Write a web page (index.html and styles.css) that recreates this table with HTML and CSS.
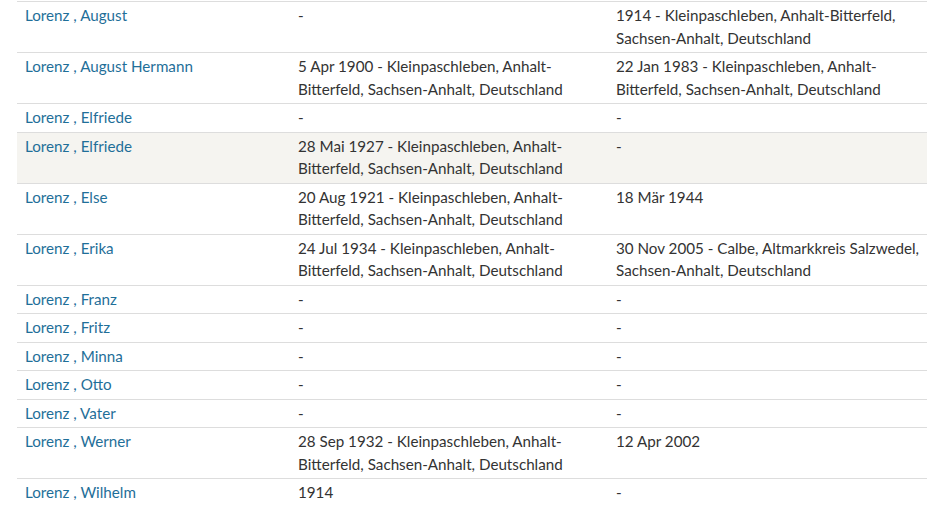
FILE: index.html
```html
<!DOCTYPE html>
<html lang="de">
<head>
<meta charset="utf-8">
<title>Lorenz</title>
<link rel="stylesheet" href="styles.css">
</head>
<body>
<div class="wrap">
<table class="persons">
<colgroup><col class="c1"><col class="c2"><col class="c3"></colgroup>
<tbody>
<tr><td><a href="#">Lorenz , August</a></td><td>-</td><td>1914 - Kleinpaschleben, Anhalt-Bitterfeld, Sachsen-Anhalt, Deutschland</td></tr>
<tr><td><a href="#">Lorenz , August Hermann</a></td><td>5 Apr 1900 - Kleinpaschleben, Anhalt-Bitterfeld, Sachsen-Anhalt, Deutschland</td><td>22 Jan 1983 - Kleinpaschleben, Anhalt-Bitterfeld, Sachsen-Anhalt, Deutschland</td></tr>
<tr><td><a href="#">Lorenz , Elfriede</a></td><td>-</td><td>-</td></tr>
<tr class="hl"><td><a href="#">Lorenz , Elfriede</a></td><td>28 Mai 1927 - Kleinpaschleben, Anhalt-Bitterfeld, Sachsen-Anhalt, Deutschland</td><td>-</td></tr>
<tr><td><a href="#">Lorenz , Else</a></td><td>20 Aug 1921 - Kleinpaschleben, Anhalt-Bitterfeld, Sachsen-Anhalt, Deutschland</td><td>18 Mär 1944</td></tr>
<tr><td><a href="#">Lorenz , Erika</a></td><td>24 Jul 1934 - Kleinpaschleben, Anhalt-Bitterfeld, Sachsen-Anhalt, Deutschland</td><td>30 Nov 2005 - Calbe, Altmarkkreis Salzwedel, Sachsen-Anhalt, Deutschland</td></tr>
<tr><td><a href="#">Lorenz , Franz</a></td><td>-</td><td>-</td></tr>
<tr><td><a href="#">Lorenz , Fritz</a></td><td>-</td><td>-</td></tr>
<tr><td><a href="#">Lorenz , Minna</a></td><td>-</td><td>-</td></tr>
<tr><td><a href="#">Lorenz , Otto</a></td><td>-</td><td>-</td></tr>
<tr><td><a href="#">Lorenz , Vater</a></td><td>-</td><td>-</td></tr>
<tr><td><a href="#">Lorenz , Werner</a></td><td>28 Sep 1932 - Kleinpaschleben, Anhalt-Bitterfeld, Sachsen-Anhalt, Deutschland</td><td>12 Apr 2002</td></tr>
<tr><td><a href="#">Lorenz , Wilhelm</a></td><td>1914</td><td>-</td></tr>
</tbody>
</table>
</div>
</body>
</html>
```
FILE: styles.css
```css
html, body {
  margin: 0;
  padding: 0;
  background: #ffffff;
}
.wrap {
  padding: 1px 18px 0 17px;
}
.persons {
  width: 910px;
  border-collapse: collapse;
  table-layout: fixed;
  font-family: Lato, "Open Sans", sans-serif;
  font-size: 15.2px;
  line-height: 22.5px;
  color: #333333;
  border-top: 1px solid #dddddd;
}
.c1 { width: 273px; }
.c2 { width: 318px; }
.c3 { width: 319px; }
.persons td {
  vertical-align: top;
  padding: 2px 4px 3px 8px;
  border-bottom: 1px solid #dddddd;
}
.persons tr.hl td {
  background: #f5f4f0;
}
.persons a {
  color: #1f6f99;
  text-decoration: none;
}
```
